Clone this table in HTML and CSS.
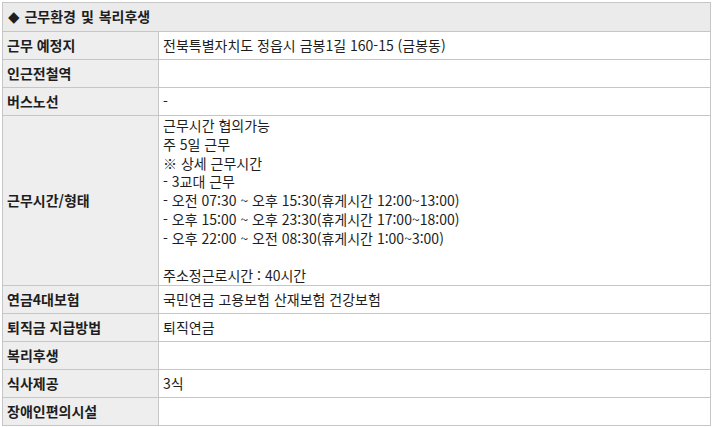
FILE: index.html
```html
<!DOCTYPE html>
<html lang="ko">
<head>
<meta charset="utf-8">
<title>근무환경 및 복리후생</title>
<link rel="stylesheet" href="styles.css">
</head>
<body>
<div class="wrap">
<table class="info">
  <colgroup><col class="c-label"><col class="c-value"></colgroup>
  <tr><th class="head" colspan="2"><span class="bullet">◆</span> 근무환경 및 복리후생</th></tr>
  <tr><th>근무 예정지</th><td>전북특별자치도 정읍시 금봉1길 160-15 (금봉동)</td></tr>
  <tr><th>인근전철역</th><td></td></tr>
  <tr><th>버스노선</th><td>-</td></tr>
  <tr><th>근무시간/형태</th><td class="multi">근무시간 협의가능<br>주 5일 근무<br>※ 상세 근무시간<br>- 3교대 근무<br>- 오전 07:30 ~ 오후 15:30(휴게시간 12:00~13:00)<br>- 오후 15:00 ~ 오후 23:30(휴게시간 17:00~18:00)<br>- 오후 22:00 ~ 오전 08:30(휴게시간 1:00~3:00)<br><br>주소정근로시간 : 40시간</td></tr>
  <tr><th>연금4대보험</th><td>국민연금 고용보험 산재보험 건강보험</td></tr>
  <tr><th>퇴직금 지급방법</th><td>퇴직연금</td></tr>
  <tr><th>복리후생</th><td></td></tr>
  <tr><th>식사제공</th><td>3식</td></tr>
  <tr><th>장애인편의시설</th><td></td></tr>
</table>
</div>
</body>
</html>
```
FILE: styles.css
```css
html, body {
  margin: 0;
  padding: 0;
  background: #ffffff;
}
.wrap {
  padding: 2px 0 0 2px;
}
.info {
  width: 709px;
  border-collapse: collapse;
  font-family: "Noto Sans CJK KR", "Noto Sans", sans-serif;
  font-size: 14px;
  color: #1e1e1e;
  table-layout: fixed;
}
.c-label { width: 156px; }
.info th, .info td {
  border: 1px solid #c6c6c6;
  padding: 0 4px;
  height: 27px;
  line-height: 18.8px;
  vertical-align: middle;
  text-align: left;
}
.info th {
  background: #eeeeee;
  font-weight: 700;
}
.info th.head {
  height: 28px;
  background: #ebebeb;
  padding-left: 5px;
  word-spacing: 1px;
}
.bullet {
  font-family: "DejaVu Sans", sans-serif;
  font-size: 15px;
}
.info td {
  background: #ffffff;
  font-weight: 400;
}
.info td.multi {
  padding-top: 0;
  padding-bottom: 0;
}
```
